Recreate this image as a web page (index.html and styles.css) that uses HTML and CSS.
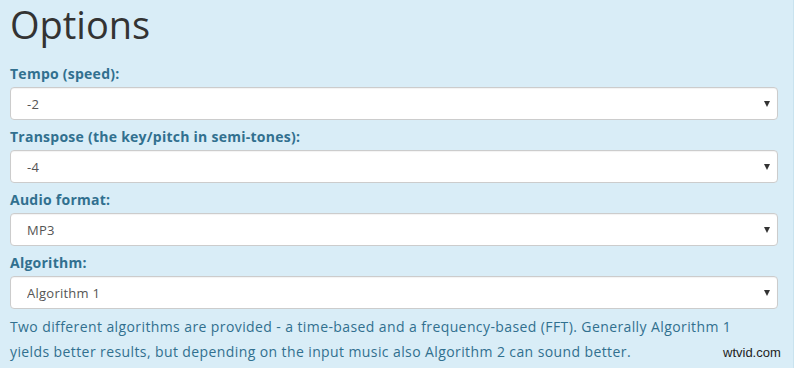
FILE: index.html
```
<!DOCTYPE html>
<html lang="en">
<head>
    <meta charset="UTF-8">
    <meta name="viewport" content="width=device-width, initial-scale=1.0">
    <title>Options</title>
    <link rel="stylesheet" href="styles.css">
</head>
<body>
    <div class="options-panel">
        <h2 class="panel-title">Options</h2>

        <label for="tempo">Tempo (speed):</label>
        <div class="select-wrap">
            <select id="tempo">
                <option>-2</option>
            </select>
        </div>

        <label for="transpose">Transpose (the key/pitch in semi-tones):</label>
        <div class="select-wrap">
            <select id="transpose">
                <option>-4</option>
            </select>
        </div>

        <label for="format">Audio format:</label>
        <div class="select-wrap">
            <select id="format">
                <option>MP3</option>
            </select>
        </div>

        <label for="algorithm">Algorithm:</label>
        <div class="select-wrap">
            <select id="algorithm">
                <option>Algorithm 1</option>
            </select>
        </div>

        <p class="help-text">Two different algorithms are provided - a time-based and a frequency-based (FFT). Generally Algorithm 1 yields better results, but depending on the input music also Algorithm 2 can sound better.</p>
    </div>
    <span class="watermark">wtvid.com</span>
</body>
</html>
```

FILE: styles.css
```
html, body {
    margin: 0;
    height: 100%;
}

body {
    font-family: "Open Sans", Arial, sans-serif;
    background-color: #d9edf7;
    border-right: 1px solid #c9e3ef;
    box-sizing: border-box;
    position: relative;
    overflow: hidden;
}

.options-panel {
    width: 768px;
    padding-left: 10px;
}

.panel-title {
    font-size: 38px;
    font-weight: 400;
    color: #333;
    line-height: 46px;
    margin: 0;
    padding-top: 1px;
    padding-bottom: 15px;
}

label {
    display: block;
    font-size: 14px;
    font-weight: 700;
    letter-spacing: 0.25px;
    color: #31708f;
    line-height: 20px;
    padding-top: 2px;
    margin-bottom: 3px;
}

.select-wrap {
    position: relative;
    margin-bottom: 5px;
}

.select-wrap::after {
    content: "";
    position: absolute;
    right: 8px;
    top: 14px;
    border-left: 3.5px solid transparent;
    border-right: 3.5px solid transparent;
    border-top: 6px solid #333;
    pointer-events: none;
}

select {
    -webkit-appearance: none;
    appearance: none;
    width: 100%;
    height: 33px;
    padding: 0 16px;
    font-family: "Open Sans", Arial, sans-serif;
    font-size: 13px;
    letter-spacing: 0.25px;
    color: #555;
    background-color: white;
    border: 1px solid #ccc;
    border-radius: 4px;
    box-shadow: inset 0 1px 1px rgba(0,0,0,0.05);
}

.help-text {
    margin: 0;
    padding-right: 12px;
    font-size: 14px;
    letter-spacing: 0.4px;
    line-height: 25px;
    color: #31708f;
}

.watermark {
    position: absolute;
    left: 723px;
    top: 345px;
    font-family: Arial, "Liberation Sans", sans-serif;
    font-size: 13px;
    color: #222;
}
```
